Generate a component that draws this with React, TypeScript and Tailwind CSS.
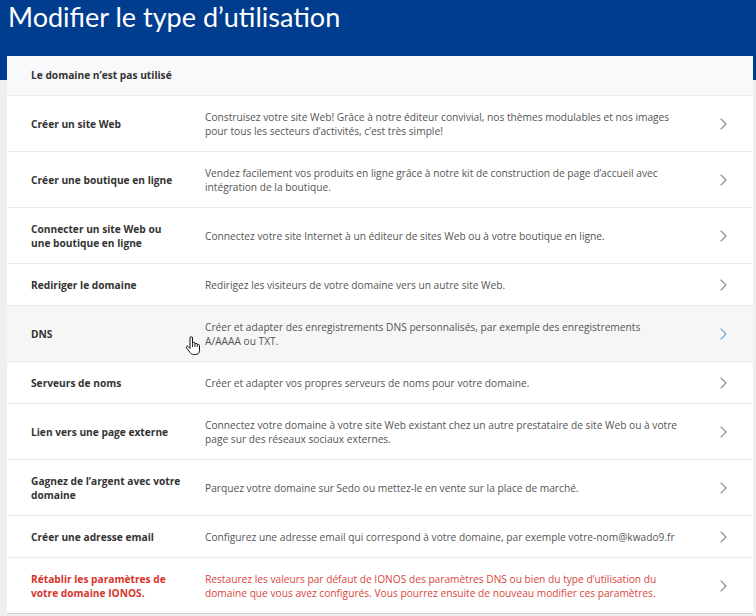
import React from "react";

// ─── Données ────────────────────────────────────────────────────────────────

interface UsageOption {
  id: string;
  title: string;
  description: string;
  danger?: boolean;
  hover?: boolean;
}

const OPTIONS: UsageOption[] = [
  {
    id: "site",
    title: "Créer un site Web",
    description:
      "Construisez votre site Web! Grâce à notre éditeur convivial, nos thèmes modulables et nos images pour tous les secteurs d’activités, c’est très simple!",
  },
  {
    id: "shop",
    title: "Créer une boutique en ligne",
    description:
      "Vendez facilement vos produits en ligne grâce à notre kit de construction de page d’accueil avec intégration de la boutique.",
  },
  {
    id: "connect",
    title: "Connecter un site Web ou une boutique en ligne",
    description: "Connectez votre site Internet à un éditeur de sites Web ou à votre boutique en ligne.",
  },
  {
    id: "redirect",
    title: "Rediriger le domaine",
    description: "Redirigez les visiteurs de votre domaine vers un autre site Web.",
  },
  {
    id: "dns",
    title: "DNS",
    description:
      "Créer et adapter des enregistrements DNS personnalisés, par exemple des enregistrements A/AAAA ou TXT.",
    hover: true,
  },
  {
    id: "ns",
    title: "Serveurs de noms",
    description: "Créer et adapter vos propres serveurs de noms pour votre domaine.",
  },
  {
    id: "external",
    title: "Lien vers une page externe",
    description:
      "Connectez votre domaine à votre site Web existant chez un autre prestataire de site Web ou à votre page sur des réseaux sociaux externes.",
  },
  {
    id: "parking",
    title: "Gagnez de l’argent avec votre domaine",
    description: "Parquez votre domaine sur Sedo ou mettez-le en vente sur la place de marché.",
  },
  {
    id: "email",
    title: "Créer une adresse email",
    description: "Configurez une adresse email qui correspond à votre domaine, par exemple votre-nom@kwado9.fr",
  },
  {
    id: "reset",
    title: "Rétablir les paramètres de votre domaine IONOS.",
    description:
      "Restaurez les valeurs par défaut de IONOS des paramètres DNS ou bien du type d’utilisation du domaine que vous avez configurés. Vous pourrez ensuite de nouveau modifier ces paramètres.",
    danger: true,
  },
];

// ─── Icônes ─────────────────────────────────────────────────────────────────

function Chevron({ active }: { active?: boolean }) {
  return (
    <svg width="7" height="12" viewBox="0 0 7 12" className="shrink-0">
      <path
        d="M1 1l5 5-5 5"
        fill="none"
        stroke={active ? "#6ea6d8" : "#8c8c8c"}
        strokeWidth="1.1"
        strokeLinecap="round"
        strokeLinejoin="round"
      />
    </svg>
  );
}

// pointeur de souris (main) visible sur la ligne survolée
function HandCursor() {
  return (
    <svg width="16" height="22" viewBox="0 0 16 21" className="absolute left-[178px] top-[29px]">
      <path
        d="M5 10V2.5a1.25 1.25 0 0 1 2.5 0V8a1.2 1.2 0 0 1 2.4 0V9a1.2 1.2 0 0 1 2.4 0v1a1.1 1.1 0 0 1 2.2 0v5c0 2.5-1.5 4-4 4H8.5c-1.5 0-2.5-.7-3.3-1.8L1.6 12.5a1.1 1.1 0 0 1 1.7-1.4L5 13Z"
        fill="#fff"
        stroke="#111"
        strokeWidth="1"
        strokeLinejoin="round"
      />
      <path d="M7.5 8v3.5M9.9 9v2.5M12.3 10v1.5" stroke="#111" strokeWidth="0.9" />
    </svg>
  );
}

// ─── Page ───────────────────────────────────────────────────────────────────

export default function App() {
  return (
    <div className="min-h-[616px] bg-[#efefef] font-['Open_Sans',sans-serif] text-[#333]">
      <div className="h-[80px] bg-[#003d8f] px-[8px]">
        <h1 className="font-['Lato',sans-serif] text-[27px] leading-[34px] text-white">
          Modifier le type d’utilisation
        </h1>
      </div>

      <div className="ml-[7px] mr-[3px] -mt-[24px] bg-white border-b border-[#c9d3dc] relative">
        <div className="h-[40px] flex items-center pl-[24px] bg-[#f8f9fb] border-b border-[#e9eaec]">
          <span className="text-[10.2px] font-bold text-[#333]">Le domaine n’est pas utilisé</span>
        </div>

        {OPTIONS.map((opt, i) => (
          <div
            key={opt.id}
            className={`relative flex items-center pt-[14px] pb-[13px] pl-[24px] ${
              i < OPTIONS.length - 1 ? "border-b border-[#ebebeb]" : ""
            } ${opt.hover ? "bg-[#f6f6f6]" : ""}`}
          >
            <div className="w-[174px] shrink-0">
              <div
                className={`w-[151px] text-[10.2px] leading-[14px] font-bold ${
                  opt.danger ? "text-[#d5352c]" : "text-[#333]"
                }`}
              >
                {opt.title}
              </div>
            </div>
            <div
              className={`w-[473px] shrink-0 text-[10.2px] leading-[14px] ${
                opt.danger ? "text-[#d9453c]" : "text-[#555]"
              }`}
            >
              {opt.description}
            </div>
            <div className="flex-1 flex justify-end pr-[26px]">
              <Chevron active={opt.hover} />
            </div>
            {opt.hover && <HandCursor />}
          </div>
        ))}
      </div>
    </div>
  );
}
